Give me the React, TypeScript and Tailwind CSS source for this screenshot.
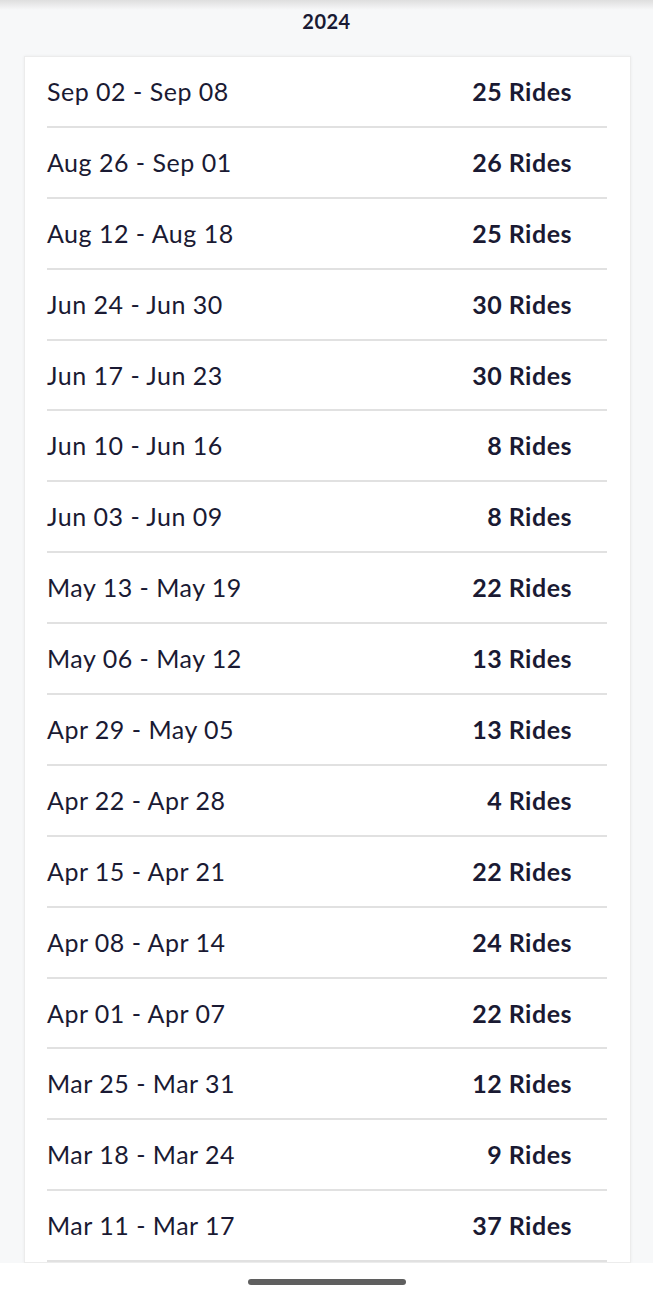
const weeks: [string, number][] = [
  ["Sep 02 - Sep 08", 25],
  ["Aug 26 - Sep 01", 26],
  ["Aug 12 - Aug 18", 25],
  ["Jun 24 - Jun 30", 30],
  ["Jun 17 - Jun 23", 30],
  ["Jun 10 - Jun 16", 8],
  ["Jun 03 - Jun 09", 8],
  ["May 13 - May 19", 22],
  ["May 06 - May 12", 13],
  ["Apr 29 - May 05", 13],
  ["Apr 22 - Apr 28", 4],
  ["Apr 15 - Apr 21", 22],
  ["Apr 08 - Apr 14", 24],
  ["Apr 01 - Apr 07", 22],
  ["Mar 25 - Mar 31", 12],
  ["Mar 18 - Mar 24", 9],
  ["Mar 11 - Mar 17", 37],
]

export default function App() {
  return (
    <div className="flex h-[1300px] w-full flex-col overflow-hidden bg-[#f7f8f9] font-['Lato',sans-serif] text-[#1a1a33]">
      {/* header shadow from above */}
      <div className="h-[10px] shrink-0 bg-gradient-to-b from-[#dedede] to-[#f7f8f9]" />

      <div className="min-h-0 flex-1 overflow-hidden">
        <h2 className="mt-[-1px] text-center text-[20px] font-bold leading-[24px] tracking-wide">2024</h2>

        {/* card */}
        <div className="ml-[24px] mr-[22px] mt-[23px] border border-[#ececec] bg-white pl-[22px] pr-[23px] shadow-[0_0_3px_rgba(0,0,0,0.06)]">
          {weeks.map(([range, rides], i) => (
            <div
              key={i}
              className="flex h-[70.9px] items-center justify-between border-b-2 border-[#e1e1e1] pr-[35px] text-[25px] leading-none tracking-[0.5px]"
            >
              <span>{range}</span>
              <span className="font-bold">{rides} Rides</span>
            </div>
          ))}
        </div>
      </div>

      {/* home indicator */}
      <div className="flex h-[37px] shrink-0 items-start justify-center bg-white pt-[16px]">
        <div className="h-[6px] w-[158px] rounded-full bg-[#5f5f5f]" />
      </div>
    </div>
  )
}
